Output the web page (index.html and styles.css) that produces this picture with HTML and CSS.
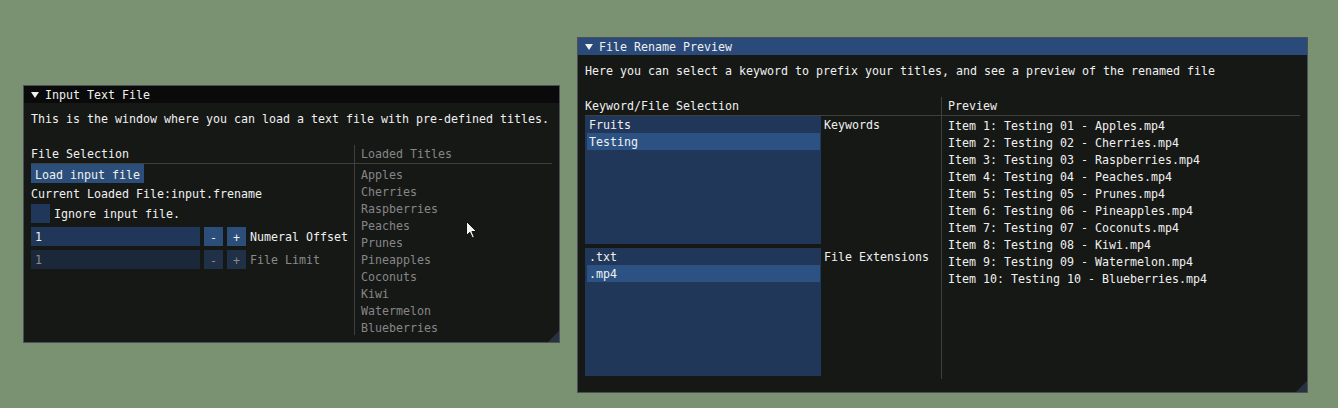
FILE: index.html
```html
<!DOCTYPE html>
<html>
<head>
<meta charset="utf-8">
<title>File Renamer</title>
<link rel="stylesheet" href="styles.css">
</head>
<body>
<section class="win win-input">
  <header class="win-title inactive">
    <svg class="tri" width="8" height="6" viewBox="0 0 8 6"><polygon points="0,0 8,0 4,6" fill="#f0f0f0"/></svg>
    <span>Input Text File</span>
  </header>
  <div class="win-body">
    <p class="desc">This is the window where you can load a text file with pre-defined titles.</p>
    <div class="tbl tbl-input">
      <div class="tcol tcol-left">
        <div class="th">File Selection</div>
        <div class="stack">
          <button class="btn btn-load">Load input file</button>
          <div class="line">Current Loaded File:input.frename</div>
          <div class="row">
            <span class="check"></span>
            <span class="lbl">Ignore input file.</span>
          </div>
          <div class="row">
            <div class="input">1</div>
            <button class="btn sq">-</button>
            <button class="btn sq">+</button>
            <span class="lbl">Numeral Offset</span>
          </div>
          <div class="row disabled">
            <div class="input">1</div>
            <button class="btn sq">-</button>
            <button class="btn sq">+</button>
            <span class="lbl">File Limit</span>
          </div>
        </div>
      </div>
      <div class="tcol tcol-right">
        <div class="th dim">Loaded Titles</div>
        <ul class="list dim list-titles">
          <li>Apples</li>
          <li>Cherries</li>
          <li>Raspberries</li>
          <li>Peaches</li>
          <li>Prunes</li>
          <li>Pineapples</li>
          <li>Coconuts</li>
          <li>Kiwi</li>
          <li>Watermelon</li>
          <li>Blueberries</li>
        </ul>
      </div>
    </div>
  </div>
  <div class="grip"></div>
</section>

<section class="win win-preview">
  <header class="win-title active">
    <svg class="tri" width="8" height="6" viewBox="0 0 8 6"><polygon points="0,0 8,0 4,6" fill="#f0f0f0"/></svg>
    <span>File Rename Preview</span>
  </header>
  <div class="win-body">
    <p class="desc">Here you can select a keyword to prefix your titles, and see a preview of the renamed file</p>
    <div class="tbl tbl-preview">
      <div class="tcol tcol-left">
        <div class="th">Keyword/File Selection</div>
        <div class="lb-stack">
          <div class="lb-row">
            <div class="listbox">
              <div class="opt">Fruits</div>
              <div class="opt sel">Testing</div>
            </div>
            <span class="lb-label">Keywords</span>
          </div>
          <div class="lb-row">
            <div class="listbox">
              <div class="opt">.txt</div>
              <div class="opt sel">.mp4</div>
            </div>
            <span class="lb-label">File Extensions</span>
          </div>
        </div>
      </div>
      <div class="tcol tcol-right">
        <div class="th">Preview</div>
        <ul class="list list-preview">
          <li>Item 1: Testing 01 - Apples.mp4</li>
          <li>Item 2: Testing 02 - Cherries.mp4</li>
          <li>Item 3: Testing 03 - Raspberries.mp4</li>
          <li>Item 4: Testing 04 - Peaches.mp4</li>
          <li>Item 5: Testing 05 - Prunes.mp4</li>
          <li>Item 6: Testing 06 - Pineapples.mp4</li>
          <li>Item 7: Testing 07 - Coconuts.mp4</li>
          <li>Item 8: Testing 08 - Kiwi.mp4</li>
          <li>Item 9: Testing 09 - Watermelon.mp4</li>
          <li>Item 10: Testing 10 - Blueberries.mp4</li>
        </ul>
      </div>
    </div>
  </div>
  <div class="grip"></div>
</section>

<svg class="cursor" width="12" height="18" viewBox="0 0 12 18">
  <path d="M0.5,0.5 L0.5,14.5 L3.8,11.3 L6.3,16.8 L8.3,15.9 L5.9,10.5 L10.5,10.5 Z" fill="#f4f4f4" stroke="#111" stroke-width="1"/>
</svg>
</body>
</html>
```

FILE: styles.css
```css
* {
  box-sizing: border-box;
  margin: 0;
  padding: 0;
}

html, body {
  width: 1338px;
  height: 408px;
  overflow: hidden;
}

body {
  position: relative;
  background: #7b9272;
  font-family: "DejaVu Sans Mono", "Liberation Mono", monospace;
  font-size: 11.63px;
  line-height: 13px;
  color: #f0f0f0;
}

/* ---------- windows ---------- */
.win {
  position: absolute;
  display: flex;
  flex-direction: column;
  background: #161816;
}

.win::after {
  content: "";
  position: absolute;
  inset: 0;
  border: 1px solid #4a4f58;
  pointer-events: none;
}

.win-input {
  left: 23px;
  top: 85px;
  width: 537px;
  height: 258px;
}

.win-preview {
  left: 577px;
  top: 37px;
  width: 731px;
  height: 356px;
}

.win-title {
  display: flex;
  align-items: flex-start;
  height: 18px;
  padding: 4px 8px 0;
  white-space: pre;
}

.win-title.inactive { background: #0a0a0a; }
.win-title.active { background: #2a4a7a; }

.tri {
  flex: none;
  margin: 3px 6px 0 0;
}

.win-body {
  flex: 1;
  padding: 10px 8px 0;
}

.desc {
  white-space: pre;
}

/* ---------- tables ---------- */
.tbl {
  display: grid;
  margin-top: 19px;
}

.tbl-input {
  grid-template-columns: 324px 1fr;
  height: 189px;
}

.tbl-preview {
  grid-template-columns: 357px 1fr;
  height: 282px;
}

.tcol-left {
  border-right: 1px solid #3d3f40;
}

.th {
  height: 19px;
  padding-top: 3px;
  border-bottom: 1px solid #40403a;
  white-space: pre;
}

.tcol-right .th,
.tcol-right .list {
  padding-left: 6px;
}

.dim {
  color: #868686;
}

.list {
  list-style: none;
  display: flex;
  flex-direction: column;
  gap: 4px;
  white-space: pre;
}

.list-titles { padding-top: 5px; }
.list-preview { padding-top: 4px; }

/* ---------- widgets ---------- */
.stack {
  display: flex;
  flex-direction: column;
  align-items: flex-start;
  gap: 4px;
}

.line {
  white-space: pre;
  padding-top: 1px;
  margin-bottom: -1px;
}

.btn {
  height: 19px;
  padding: 3px 4px 0;
  border: none;
  background: #2b4f7a;
  color: #f0f0f0;
  font: inherit;
  line-height: 13px;
  text-align: left;
  white-space: pre;
}

.btn.sq {
  width: 19px;
  padding: 3px 0 0;
  text-align: center;
}

.row {
  display: flex;
  align-items: flex-start;
  gap: 4px;
  height: 19px;
}

.row .lbl {
  padding-top: 4px;
  white-space: pre;
}

.check {
  width: 19px;
  height: 19px;
  background: #213759;
}

.input {
  width: 169px;
  height: 19px;
  padding: 4px 4px 0;
  background: #213759;
}

.row.disabled .input { background: #1b2839; color: #8a8a8a; }
.row.disabled .btn { background: #1f3047; color: #8a8a8a; }
.row.disabled .lbl { color: #8a8a8a; }

/* ---------- list boxes ---------- */
.lb-stack {
  display: flex;
  flex-direction: column;
  gap: 4px;
}

.lb-row {
  display: flex;
  align-items: flex-start;
  gap: 3px;
}

.listbox {
  width: 236px;
  height: 128px;
  padding: 0 1px 0 2px;
  background: #213759;
}

.opt {
  height: 17px;
  padding: 3px 0 0 2px;
  white-space: pre;
}

.opt.sel {
  background: #2c5283;
}

.lb-label {
  padding-top: 3px;
  white-space: pre;
}

/* ---------- overlays ---------- */
.grip {
  position: absolute;
  right: 1px;
  bottom: 1px;
  width: 11px;
  height: 11px;
  background: #28323f;
  clip-path: polygon(100% 0, 100% 100%, 0 100%);
}

.cursor {
  position: absolute;
  left: 466px;
  top: 221px;
}
```
